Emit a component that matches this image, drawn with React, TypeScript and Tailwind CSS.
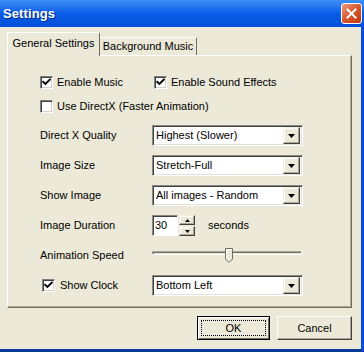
import React from 'react';

const Check = ({ checked }: { checked?: boolean }) => (
  <div className="w-[13px] h-[13px] bg-white border border-t-[#808080] border-l-[#808080] border-r-white border-b-white shadow-[inset_1px_1px_0_#404040,inset_-1px_-1px_0_#d4d0c8] flex items-center justify-center shrink-0">
    {checked && (
      <svg width="9" height="9" viewBox="0 0 9 9">
        <path d="M1.2 3.8 L3.4 6 L7.8 1.6" stroke="#000" strokeWidth="1.9" fill="none" strokeLinecap="square" />
      </svg>
    )}
  </div>
);

const ArrowBtn = ({ up, small }: { up?: boolean; small?: boolean }) => (
  <div
    className={
      'bg-[#ECE9D8] border border-t-[#f1efe2] border-l-[#f1efe2] border-r-[#404040] border-b-[#404040] shadow-[inset_-1px_-1px_0_#aca899,inset_1px_1px_0_#ffffff] flex items-center justify-center ' +
      (small ? 'w-[16px] h-[10px]' : 'w-[17px] h-[17px]')
    }
  >
    <svg width={small ? 5 : 7} height={small ? 3 : 4} viewBox={small ? '0 0 5 3' : '0 0 7 4'}>
      {small ? (
        <polygon points={up ? '0,3 5,3 2.5,0' : '0,0 5,0 2.5,3'} fill="#000" />
      ) : (
        <polygon points="0,0 7,0 3.5,4" fill="#000" />
      )}
    </svg>
  </div>
);

const Select = ({ value }: { value: string }) => (
  <div className="w-[151px] h-[21px] bg-white border border-t-[#8c8a80] border-l-[#8c8a80] border-r-white border-b-white shadow-[inset_1px_1px_0_#404040,inset_-1px_-1px_0_#e4e2d8] flex items-center pl-[3px] pr-[2px]">
    <span className="flex-1 leading-none">{value}</span>
    <ArrowBtn />
  </div>
);

const Row = ({ label, children, className = '' }: { label: React.ReactNode; children: React.ReactNode; className?: string }) => (
  <div className={'flex items-center h-[21px] ' + className}>
    <div className="w-[112px] shrink-0">{label}</div>
    {children}
  </div>
);

export default function App() {
  return (
    <div className="w-[364px] h-[352px] flex flex-col bg-[#ECE9D8] text-black text-[11px] overflow-hidden font-['Liberation_Sans',Arial,sans-serif]">
      {/* title bar */}
      <div className="h-[27px] shrink-0 flex items-center justify-between pl-[3px] pr-[2px] bg-gradient-to-b from-[#3d8ff6] via-[#0a5ce8] to-[#0250d8]">
        <span className="text-white font-bold text-[13px] tracking-[0.1px] [text-shadow:1px_1px_0_#0a2a80]">Settings</span>
        <div className="w-[21px] h-[21px] rounded-[3px] border border-white bg-gradient-to-br from-[#eb9a7c] via-[#d8552c] to-[#c13a10] flex items-center justify-center">
          <svg width="11" height="11" viewBox="0 0 11 11">
            <path d="M1.5 1.5 L9.5 9.5 M9.5 1.5 L1.5 9.5" stroke="#fff" strokeWidth="2" strokeLinecap="square" />
          </svg>
        </div>
      </div>

      <div className="flex-1 flex flex-col border-r-[3px] border-b-[3px] border-r-[#0a4be0] border-b-[#0a3a9a]">
        <div className="pl-[7px] pr-[9px] pt-[5px]">
          {/* tabs */}
          <div className="flex items-end h-[23px]">
            <div className="relative z-10 -mb-px w-[93px] h-[24px] bg-[#ECE9D8] border-l border-t border-r border-l-white border-t-white border-r-[#716f64] rounded-tl-[2px] rounded-tr-[2px] flex items-center justify-center pb-[2px]">
              General Settings
            </div>
            <div className="w-[97px] h-[18px] border-t border-r border-t-white border-r-[#716f64] rounded-tr-[2px] flex items-center justify-center">
              Background Music
            </div>
          </div>

          {/* panel */}
          <div className="h-[253px] border border-t-white border-l-white border-r-[#716f64] border-b-[#716f64] shadow-[inset_-1px_-1px_0_#aca899] pl-[32px] flex flex-col">
            <div className="flex items-center h-[20px] mt-[16px]">
              <div className="w-[114px] flex items-center gap-[4px]">
                <Check checked />
                <span>Enable Music</span>
              </div>
              <div className="flex items-center gap-[4px]">
                <Check checked />
                <span>Enable Sound Effects</span>
              </div>
            </div>

            <div className="flex items-center h-[20px] mt-[4px] gap-[4px]">
              <Check />
              <span>Use DirectX (Faster Animation)</span>
            </div>

            <Row label="Direct X Quality" className="mt-[9px]">
              <Select value="Highest (Slower)" />
            </Row>
            <Row label="Image Size" className="mt-[9px]">
              <Select value="Stretch-Full" />
            </Row>
            <Row label="Show Image" className="mt-[9px]">
              <Select value="All images - Random" />
            </Row>
            <Row label="Image Duration" className="mt-[9px]">
              <div className="w-[26px] h-[21px] bg-white border border-t-[#8c8a80] border-l-[#8c8a80] border-r-white border-b-white shadow-[inset_1px_1px_0_#404040] flex items-center pl-[2px]">
                30
              </div>
              <div className="flex flex-col gap-px ml-[1px]">
                <ArrowBtn up small />
                <ArrowBtn small />
              </div>
              <span className="ml-[13px]">seconds</span>
            </Row>
            <Row label="Animation Speed" className="mt-[9px]">
              <div className="relative w-[150px] h-[21px]">
                <div className="absolute left-0 right-0 top-[6px] h-[4px] border border-t-[#aca899] border-l-[#aca899] border-r-white border-b-white shadow-[inset_1px_1px_0_#716f64] bg-[#ECE9D8]" />
                <svg className="absolute left-[73px] top-[3px]" width="8" height="15" viewBox="0 0 8 15">
                  <polygon points="0.5,0.5 7.5,0.5 7.5,11 4,14.5 0.5,11" fill="#ECE9D8" stroke="#716f64" />
                  <polyline points="1.5,11 1.5,1.5 6.5,1.5" fill="none" stroke="#ffffff" />
                </svg>
              </div>
            </Row>
            <div className="flex items-center h-[21px] mt-[9px]">
              <div className="w-[112px] flex items-center gap-[5px] pl-[2px]">
                <Check checked />
                <span>Show Clock</span>
              </div>
              <Select value="Bottom Left" />
            </div>
          </div>
        </div>

        {/* buttons */}
        <div className="flex justify-end gap-[7px] pr-[9px] mt-[8px]">
          <div className="w-[73px] h-[24px] border border-black bg-[#ECE9D8] shadow-[inset_1px_1px_0_#ffffff,inset_-1px_-1px_0_#716f64] p-[3px]">
            <div className="w-full h-full border border-dotted border-black flex items-center justify-center">OK</div>
          </div>
          <div className="w-[75px] h-[24px] border border-t-white border-l-white border-r-[#404040] border-b-[#404040] bg-[#ECE9D8] shadow-[inset_-1px_-1px_0_#aca899] flex items-center justify-center">
            Cancel
          </div>
        </div>
      </div>
    </div>
  );
}
